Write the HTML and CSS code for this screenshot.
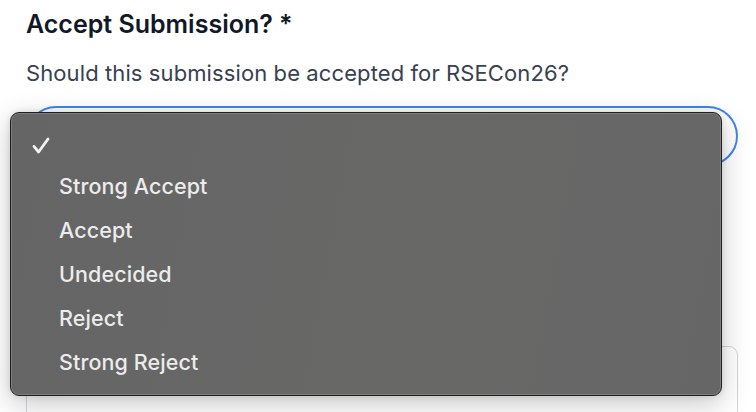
FILE: index.html
```html
<!DOCTYPE html>
<html lang="en">
<head>
<meta charset="utf-8">
<title>Review form</title>
<link rel="stylesheet" href="styles.css">
</head>
<body>
<main class="form">
  <section class="field">
    <h2 class="label">Accept Submission? *</h2>
    <p class="help">Should this submission be accepted for RSECon26?</p>
    <div class="select-wrap">
      <div class="select"></div>
      <ul class="menu">
        <li class="item selected"><svg class="check" viewBox="0 0 18 17" aria-hidden="true"><path d="M2 9.4 L6.6 15 L16 2" fill="none" stroke="currentColor" stroke-width="2.8" stroke-linecap="round" stroke-linejoin="round"/></svg></li>
        <li class="item">Strong Accept</li>
        <li class="item">Accept</li>
        <li class="item">Undecided</li>
        <li class="item">Reject</li>
        <li class="item">Strong Reject</li>
      </ul>
    </div>
  </section>
  <div class="next-box"></div>
</main>
</body>
</html>
```

FILE: styles.css
```css
html, body {
  margin: 0;
  padding: 0;
  background: #ffffff;
  overflow: hidden;
}
body {
  font-family: Inter, "Noto Sans", "Liberation Sans", sans-serif;
  width: 756px;
  height: 412px;
}
.form {
  padding: 0 18px 0 26px;
}
.label {
  margin: 8px 0 0;
  font-size: 25px;
  line-height: 32px;
  font-weight: 600;
  color: #111827;
  letter-spacing: 0;
}
.help {
  margin: 19px 0 0;
  font-size: 22px;
  line-height: 28px;
  color: #374151;
  letter-spacing: 0.1px;
}
.select-wrap {
  position: relative;
  margin-top: 19px;
}
.select {
  height: 60px;
  box-sizing: border-box;
  border: 2px solid #3f86ee;
  border-radius: 30px;
  background: #fff;
}
.menu {
  position: absolute;
  left: -16px;
  top: 6px;
  width: 712px;
  height: 284px;
  box-sizing: border-box;
  margin: 0;
  padding: 7px 0 13px;
  list-style: none;
  background: linear-gradient(100deg, #656565 0%, #686867 60%, #666666 100%);
  border: 1px solid #1f1f1f;
  border-radius: 9px;
  box-shadow: inset 0 0 0 1px rgba(255,255,255,0.16), 0 8px 28px rgba(0,0,0,0.22), 0 0 6px rgba(0,0,0,0.12);
}
.item {
  display: flex;
  align-items: center;
  height: 44px;
  padding-left: 48px;
  font-size: 21.5px;
  font-weight: 500;
  color: #ececec;
  letter-spacing: 0.1px;
}
.item.selected {
  padding-left: 21px;
}
.check {
  width: 18px;
  height: 17px;
  margin-top: 6px;
  color: #f2f2f2;
}
.next-box {
  margin-top: 180px;
  height: 120px;
  border: 1px solid #d4d6dc;
  border-radius: 9px;
}
```
